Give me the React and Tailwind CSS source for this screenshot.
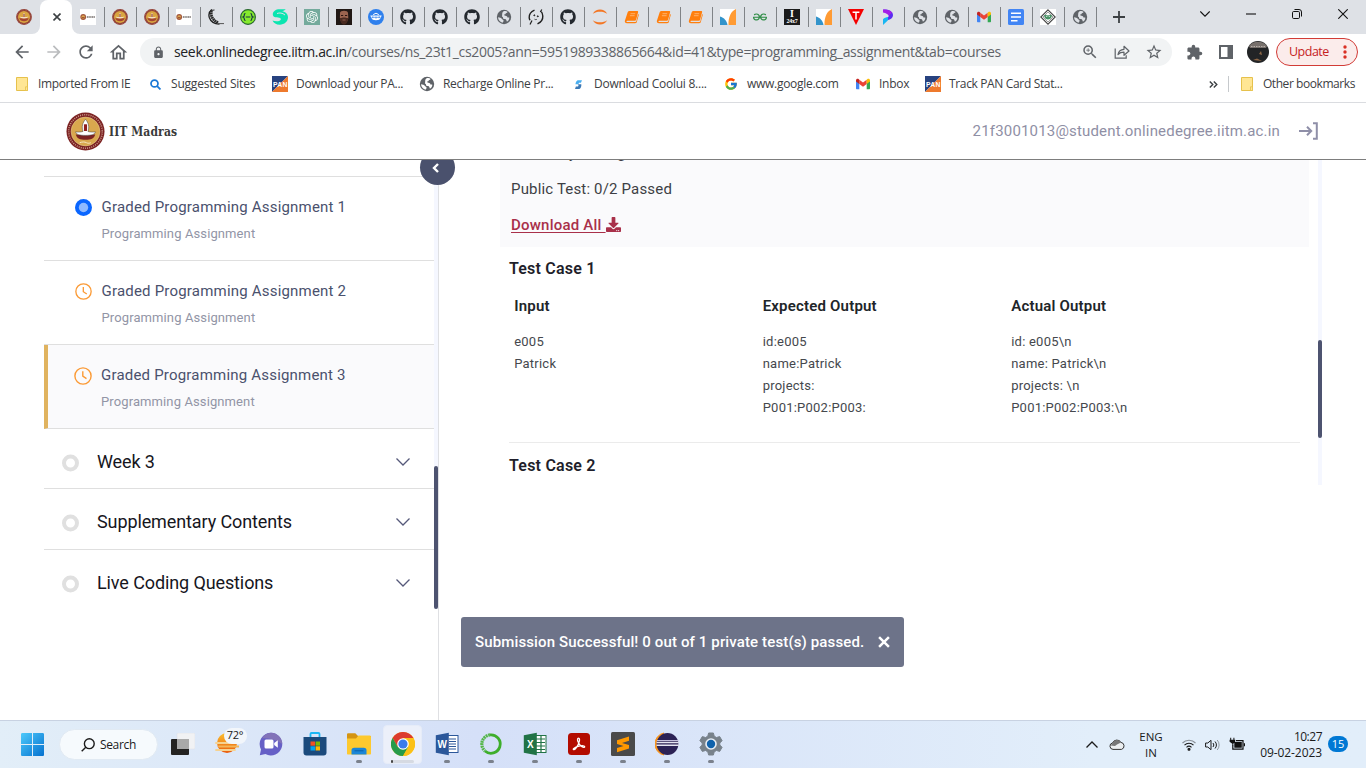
import React from "react";
import { FaGithub, FaDownload } from "react-icons/fa";
import { MdArrowBack, MdArrowForward, MdRefresh, MdOutlineHome, MdLock, MdZoomIn, MdStarBorder, MdExtension } from "react-icons/md";
import { FcGoogle } from "react-icons/fc";
import { SiGeeksforgeeks, SiOpenai } from "react-icons/si";

/* ---------- favicons ---------- */
const Seal = ({ className = "size-4" }) => (
  <svg viewBox="0 0 16 16" className={className}>
    <circle cx="8" cy="8" r="7.9" fill="#8d3b34" />
    <circle cx="8" cy="8" r="7" fill="none" stroke="#c07a62" strokeWidth=".7" strokeDasharray=".8 .8" />
    <circle cx="8" cy="8" r="6" fill="#d9a441" />
    <path d="M3.200 9.300h9.600c-.6 1.900-2.400 3-4.800 3s-4.200-1.100-4.800-3z" fill="#a4442f" />
    <path d="M8 3.800c1 1.300 1.200 2.600.7 4.300 1.600 0 2.700-.1 3.600-.5-.3 1.300-1.800 1.800-4.300 1.800s-4-.5-4.300-1.800c.9.400 2 .5 3.600.5-.5-1.700-.3-3 .7-4.300z" fill="#f3dfc4" />
    <path d="M8 5v3" stroke="#862b26" strokeWidth="1" />
  </svg>
);
const SealWide = () => (
  <svg viewBox="0 0 16 16" className="size-4">
    <rect width="16" height="16" fill="#fff" />
    <circle cx="3.200" cy="8" r="2.900" fill="#a2573c" />
    <circle cx="3.200" cy="8" r="1.800" fill="#dca850" />
    <path d="M2 8.700h2.500" stroke="#7d2c22" strokeWidth=".8" />
    <path d="M6.800 8h8.400" stroke="#77706d" strokeWidth="1.500" strokeDasharray="1.300 .4" />
  </svg>
);
const Quill = () => (
  <svg viewBox="0 0 16 16" className="size-4" fill="none">
    <path d="M3.800.5C1.200 2.500.3 5 1.300 8.500 2.600 12.300 6 15 11.500 15.200" stroke="#1d1d1d" strokeWidth="1.300" />
    <path d="M3.500 1.500c-1.200 5 1 10 7 12.300" stroke="#2a2a2a" strokeWidth="2.800" strokeDasharray="1.800 .4" />
    <path d="M2 1.500 6.500 1" stroke="#2a2a2a" strokeWidth="1" />
    <path d="M9 14.600h7" stroke="#555" strokeWidth="1" />
  </svg>
);
const GreenH = () => (
  <svg viewBox="0 0 16 16" className="size-4" fill="none">
    <circle cx="8" cy="8" r="7.400" fill="#85ea2d" stroke="#27662f" strokeWidth="1.100" />
    <path d="M5.500 4.500c-1 0-1.200.5-1.200 1.500S4 7.700 3 8c1 .3 1.300 1 1.300 2s.2 1.500 1.200 1.500M10.500 4.500c1 0 1.200.5 1.200 1.500S12 7.700 13 8c-1 .3-1.300 1-1.300 2s-.2 1.500-1.200 1.500M5.800 8h4.500" stroke="#173647" strokeWidth="1.200" />
  </svg>
);
const Swirl = () => (
  <svg viewBox="0 0 16 16" className="size-4">
    <path d="M.8 5.500C.8 2.300 3.800.3 7.500.3h6.300c-1 1-2.200 1.600-3.600 1.900C13.500 2.700 16 5 16 8.300c0 4.400-3.600 7.400-8.200 7.400-3.600 0-6.200-1.700-7.300-4.200 2 .8 4.600 1 6.600.4 2-.7 2.300-2.200 1-2.900C6 8.200.8 9 .8 5.500z" fill="#0be5b0" />
    <path d="M5 4.500c2.500-1 5.500-.6 8 1.500" stroke="#dee1e6" strokeWidth="1" fill="none" />
  </svg>
);
const Gpt = () => (
  <span className="flex size-4 items-center justify-center bg-[#74aa9c] text-white">
    <SiOpenai size={12} />
  </span>
);
const Face = () => (
  <svg viewBox="0 0 16 16" className="size-4">
    <rect width="16" height="16" fill="#211815" />
    <path d="M4 4c0-3 8-3 8 0l.3 5c-.3 3-2 5-4.200 5S4.200 12 3.900 9z" fill="#9b6450" />
    <path d="M4 9c1.200.3 2.200-.6 4-.6s3 .9 4 .6c0 4-1.600 6.500-4 6.500S4 13 4 9z" fill="#4a2b22" />
    <path d="M5 6.500h2.200M9 6.500h2.200" stroke="#2a1512" strokeWidth="1" />
    <path d="M6.500 11h3" stroke="#a8705e" strokeWidth=".8" />
  </svg>
);
const Bowl = () => (
  <svg viewBox="0 0 16 16" className="size-4">
    <circle cx="8" cy="8" r="8" fill="#2f80ed" />
    <path d="M2.300 6.500h11.400l-1 2.300c-.6 1.700-2 2.500-4.700 2.500s-4.100-.8-4.700-2.500z" fill="#fff" />
    <path d="M5.200 5.600 8 4.200l2.800 1.400" stroke="#fff" fill="none" />
    <path d="M4.800 7.300v1.900M8 7.500v2.200M11.200 7.300v1.900M3.500 8.300h9" stroke="#2f80ed" strokeWidth=".7" />
  </svg>
);
const Git = () => <FaGithub size={16} color="#24292f" />;
const Globe = ({ land = "#dee1e6" }) => (
  <svg viewBox="0 0 16 16" className="size-4">
    <circle cx="8" cy="8" r="7.200" fill="#5f6368" />
    <path d="M7.200 2.600c1.600-.8 3.300-.5 4.300.2-.1 1-.9 1.300-1.700 1.500-.3 1-.9 1.300-1.700 1.300-.2.800.3 1.100 1.300 1.200 1.200.1 2 .8 2 1.700h1.800c.3.800-.2 2.300-1 3.300-.8.900-1.400 1-1.600.2-.2-1.500-.8-1.900-2.300-1.900-1.300 0-1.500-.9-1.300-2-.9-.2-1.100-.8-.9-1.600.3-1.100-.3-2.700 1.100-3.900z" fill={land} />
    <path d="M2 8.300c1.700.1 3.300.7 4 1.600.7 1 1.700.9 1.600 2-.1.700-.8.900-.9 1.900C4 13.200 2.200 11 2 8.300z" fill={land} />
  </svg>
);
const PageGlobe = () => <Globe land="#ffffff" />;
const Brackets = () => (
  <svg viewBox="0 0 16 16" className="size-4" fill="none" stroke="#1f1f1f">
    <path d="M6.500 1.200C2.800 2.900 1 5.500 1.200 8.600c.1 1.200.4 1.900.8 2.700M9.500 14.800c3.700-1.700 5.500-4.700 5.300-7.800-.1-2-.6-3.200-1.500-4.400" strokeWidth="1.400" />
    <path d="m2 15.500 2-4M13.800.5 12.300 3" strokeWidth="1.200" />
    <circle cx="6.300" cy="6.300" r=".5" fill="#1f1f1f" />
    <circle cx="9.800" cy="7.300" r=".5" fill="#1f1f1f" />
    <path d="M6.500 10.200c.8.500 1.500.5 2.300.2" strokeWidth=".8" />
  </svg>
);
const Jupyter = () => (
  <svg viewBox="0 0 16 16" className="size-4" fill="#f37726">
    <path d="M.8 4.800C2.500 1.800 5 .6 8 .6s5.500 1.200 7.200 4.200C13.200 3.300 10.800 2.700 8 2.700s-5.200.6-7.200 2.100zM.8 11.200c1.700 3 4.200 4.200 7.200 4.200s5.500-1.200 7.200-4.200c-2 1.500-4.400 2.100-7.200 2.100s-5.200-.6-7.200-2.100z" />
  </svg>
);
const Book = () => (
  <svg viewBox="0 0 16 16" className="size-4">
    <path d="M5.500 2h7.600c.8 0 1.200.5 1 1.200l-2 7.600c-.2.7-.6 1-1.300 1H3.300c-.5 0-.8.200-.8.600s.3.600.8.600h8c.5 0 .8-.2 1-.8l1.900-7.100c.5.200.7.600.5 1.200l-1.900 6.700c-.2.800-.8 1.200-1.600 1.200H3c-1.600 0-2.500-1.100-2.100-2.500l2.600-8C3.800 2.600 4.500 2 5.500 2z" fill="#ff7f0e" />
    <path d="M6.500 4.700h4.700M5.900 6.700h4.700" stroke="#ffd3a6" strokeWidth=".6" />
  </svg>
);
const Peak = () => (
  <svg viewBox="0 0 16 16" className="size-4">
    <rect width="16" height="16" fill="#fff" />
    <path d="M0 7.500C4 8.500 7 12 7.500 16H0z" fill="#3394cb" />
    <path d="M16 0v16H8.500C8.200 8 11 2 16 0z" fill="#ff9b34" />
  </svg>
);
const Gfg = () => <SiGeeksforgeeks size={14} color="#2f8d46" />;
const I24 = () => (
  <span className="flex size-4 flex-col items-center bg-[#1b1b1b] font-['Liberation_Serif',serif] font-bold text-white">
    <span className="h-[9px] text-[10px] leading-[10px]">I</span>
    <span className="text-[6px] leading-[7px] tracking-[-0.2px]">24x7</span>
  </span>
);
const RedT = () => (
  <svg viewBox="0 0 16 16" className="size-4">
    <path d="M0 0h16L8 16z" fill="#f40000" />
    <path d="M4.600 3.200h6.800M8 3.200v7.300" stroke="#fff" strokeWidth="1.500" />
  </svg>
);
const PurpleP = () => (
  <svg viewBox="0 0 16 16" className="size-4">
    <path d="M3 .6C8 .2 13 2 13 6c0 3-2.600 4.700-5 5v-3c1.300-.6 1-2.200-.3-2.800z" fill="#5b2df0" />
    <path d="M3 .6C7 .4 10.500 1.500 12 3.500L8.800 6.800C8 5 6 4.300 3 3.600z" fill="#a31de8" />
    <path d="M3 10.300C4.300 8.800 6 8.200 8 8v3.300L3 16z" fill="#19b6f2" />
  </svg>
);
const Gmail = () => (
  <svg viewBox="0 0 16 16" className="size-4">
    <path d="M1 4.500 4.300 7v6.300H2c-.6 0-1-.4-1-1z" fill="#4285f4" />
    <path d="M15 4.500 11.700 7v6.300H14c.6 0 1-.4 1-1z" fill="#34a853" />
    <path d="M4.300 3.800 8 6.600l3.700-2.800V8L8 10.700 4.300 8z" fill="#ea4335" />
    <path d="M1 4.500C1 3 2.600 2.300 3.800 3.300l.5.500V8L1 5.600z" fill="#c5221f" />
    <path d="M15 4.500c0-1.500-1.600-2.200-2.800-1.200l-.5.500V8L15 5.600z" fill="#fbbc04" />
  </svg>
);
const Docs = () => (
  <svg viewBox="0 0 16 16" className="size-4">
    <rect width="16" height="16" rx="1.500" fill="#4285f4" />
    <path d="M3 4.300h10M3 8h10M3 11.700h6.500" stroke="#fff" strokeWidth="1.600" />
  </svg>
);
const Diamond = () => (
  <svg viewBox="0 0 16 16" className="size-4" fill="none">
    <rect width="16" height="16" fill="#fff" />
    <path d="m8 .8 7.200 7.200L8 15.200.8 8z" stroke="#444" strokeWidth="1.100" />
    <path d="m8 3 5 5-5 5-5-5z" stroke="#777" strokeWidth=".7" />
    <path d="M4 6.500c1.200-1.200 2.800-1 4 0 1.200-1 2.800-1.200 4 0-.3 2.800-2 4-4 4s-3.700-1.200-4-4z" fill="#4a9467" />
    <path d="M6 7.300h1.300M8.700 7.300H10" stroke="#fff" strokeWidth=".8" />
  </svg>
);

const TABS = [
  SealWide, Seal, Seal, SealWide, Quill, GreenH, Swirl, Gpt, Face, Bowl, Git, Git, Git, Globe, Brackets, Git,
  Jupyter, Book, Book, Book, Peak, Gfg, I24, Peak, RedT, PurpleP, Globe, Globe, Gmail, Docs, Diamond, Globe,
];

function TabStrip() {
  return (
    <div className="flex h-[34px] shrink-0 items-stretch bg-[#dee1e6]">
      <div className="flex w-8 items-center justify-end"><Seal /></div>
      <div className="w-2 overflow-hidden bg-white"><div className="size-full rounded-br-lg bg-[#dee1e6]" /></div>
      <div className="bg-[#dee1e6]">
        <div className="flex h-full w-8 items-center justify-center rounded-t-lg bg-white pl-px">
          <svg viewBox="0 0 8 8" className="size-2" stroke="#3c4043" strokeWidth="1.600"><path d="m.5.500 7 7m0-7-7 7" /></svg>
        </div>
      </div>
      <div className="flex">
        {TABS.map((Icon, i) => (
          <div key={i} className={i === 0 ? "flex w-8 bg-white" : "flex w-8"}>
            <div className={i === 0 ? "flex w-8 items-center rounded-bl-lg bg-[#dee1e6]" : "flex w-8 items-center"}>
              <span className={i === 0 ? "h-5 w-px" : "h-5 w-px bg-[#808387]"} />
              <span className="ml-[7px] flex size-4 items-center justify-center"><Icon /></span>
            </div>
          </div>
        ))}
        <div className="flex items-center">
          <span className="h-5 w-px bg-[#808387]" />
          <svg viewBox="0 0 12 12" className="ml-[16px] size-3" stroke="#3c4043" strokeWidth="1.800"><path d="M6 0v12M0 6h12" /></svg>
        </div>
      </div>
      <div className="ml-auto flex h-[28px] items-center text-[#111]">
        <svg viewBox="0 0 10 6" className="mr-[36px] h-[6px] w-[10px]" fill="none" stroke="currentColor" strokeWidth="1.100"><path d="m.3.500 4.700 4.700L9.700.5" /></svg>
        <svg viewBox="0 0 10 2" className="mr-[36px] h-[2px] w-[10px]"><path d="M0 1h10" stroke="currentColor" strokeWidth="1.100" /></svg>
        <svg viewBox="0 0 10 10" className="mr-[36px] size-[10px]" fill="none" stroke="currentColor"><rect x=".5" y="2.500" width="7" height="7" rx="1.200" /><path d="M2.500.500h4.500a2.500 2.500 0 0 1 2.500 2.500v4.500" /></svg>
        <svg viewBox="0 0 10 10" className="mr-[18px] size-[10px]" stroke="currentColor" strokeWidth="1.100"><path d="m.3.300 9.400 9.400m0-9.400L.3 9.700" /></svg>
      </div>
    </div>
  );
}

const Slot = ({ children }) => <span className="flex w-8 items-center justify-center">{children}</span>;

function Toolbar() {
  return (
    <div className="flex h-9 shrink-0 items-center bg-white pl-[6px] text-[#5f6368]">
      <Slot><MdArrowBack size={20} /></Slot>
      <Slot><MdArrowForward size={20} color="#babcbe" /></Slot>
      <Slot><MdRefresh size={20} /></Slot>
      <Slot><MdOutlineHome size={21} /></Slot>
      <div className="ml-[6px] flex h-7 w-[1032px] items-center rounded-full bg-[#f1f3f4] pl-[12px] font-['Open_Sans',sans-serif]">
        <MdLock size={13} />
        <span className="-mt-px ml-[9px] whitespace-nowrap text-[14px] tracking-[-0.332px] text-[#5f6368]">
          <span className="text-[#202124]">seek.onlinedegree.iitm.ac.in</span>/courses/ns_23t1_cs2005?ann=5951989338865664&amp;id=41&amp;type=programming_assignment&amp;tab=courses
        </span>
        <span className="ml-auto mr-[2px] flex">
          <Slot><MdZoomIn size={18} /></Slot>
          <Slot>
            <svg viewBox="0 0 16 16" className="size-4" fill="none" stroke="currentColor" strokeWidth="1.200">
              <path d="M1.200 4.500v9.700h11v-3" /><path d="M4 10.500c.6-3.300 2.800-5 6-5.200V2.300l5 4.700-5 4.300V8.200C7.500 8.200 5.600 8.900 4 10.500z" strokeLinejoin="round" />
            </svg>
          </Slot>
          <Slot><MdStarBorder size={18} /></Slot>
        </span>
      </div>
      <span className="ml-[6px] flex">
        <Slot><MdExtension size={17} /></Slot>
        <Slot>
          <svg viewBox="0 0 14 14" className="size-[14px]"><rect x="1" y="1" width="12" height="12" fill="#fff" stroke="currentColor" strokeWidth="2" /><rect x="8.500" y="1" width="5" height="12" fill="currentColor" /></svg>
        </Slot>
        <Slot>
          <svg viewBox="0 0 22 22" className="size-[22px]">
            <circle cx="11" cy="11" r="11" fill="#222426" />
            <path d="M2 5C6-.7 16-.7 20 5l-1 2H3z" fill="#77706c" />
            <path d="M4 5.500h14" stroke="#b9b0aa" strokeDasharray="1.500 1" />
            <path d="M12 13l2-3 1 4zM6 19l4-1.500L15 20z" fill="#8f6847" />
          </svg>
        </Slot>
      </span>
      <div className="ml-[2px] flex h-7 w-[82px] items-center rounded-full border border-[#d23b36] bg-[#fbeceb] pl-[12px] font-['Open_Sans',sans-serif] text-[12.500px] tracking-[-0.500px] text-[#c5221f]">
        Update
        <svg viewBox="0 0 4 14" className="ml-auto mr-[10px] h-[14px] w-1" fill="#d93025"><circle cx="2" cy="2" r="1.700" /><circle cx="2" cy="7" r="1.700" /><circle cx="2" cy="12" r="1.700" /></svg>
      </div>
    </div>
  );
}

const Folder = () => (
  <svg viewBox="0 0 12 14" className="h-[14px] w-3"><path d="M.5.500h11v13H.5z" fill="#ffe694" stroke="#e6c14c" /><path d="M9.500 13.500V9.800h2v3.700z" fill="#ffe694" stroke="#e6c14c" strokeWidth=".8" /></svg>
);
const Pan = () => (
  <svg viewBox="0 0 16 16" className="size-4">
    <path d="M0 0h16L0 16z" fill="#27427f" /><path d="M16 0v16H0z" fill="#ee7a2d" />
    <text x="8" y="11" textAnchor="middle" fontSize="6.800" fontWeight="700" fontFamily="Liberation Sans" fill="#fff" textLength="14">PAN</text>
  </svg>
);
const Lens = () => (
  <svg viewBox="0 0 12 12" className="size-[11px]" fill="none" stroke="#1a78d6" strokeWidth="1.900"><circle cx="4.900" cy="4.900" r="3.800" /><path d="m7.800 7.800 3.600 3.600" /></svg>
);
const Bolt = () => (
  <svg viewBox="0 0 8 10" className="h-[9px] w-[7px]"><path d="M3 0h5L6.800 3H4.500L4 4.800H.5C.8 2.500 1.500.8 3 0z" fill="#49aef0" /><path d="M5 10H0l1-2.600h2.500l.6-1.700L3 4.600h4.200C7.500 7 6.800 9 5 10z" fill="#3b78b5" /></svg>
);
const BOOKMARKS = [
  [Folder, "Imported From IE", "w-[133px]"],
  [Lens, "Suggested Sites", "w-[125px] tracking-[-0.200px]"],
  [Pan, "Download your PA...", "w-[147px] tracking-[-0.300px]"],
  [PageGlobe, "Recharge Online Pr...", "w-[151px] tracking-[-0.300px]"],
  [Bolt, "Download Coolui 8....", "w-[153px] tracking-[-0.250px]"],
  [() => <FcGoogle size={14} />, "www.google.com", "w-[132px] tracking-[-0.280px]"],
  [Gmail, "Inbox", "w-[70px] tracking-[-0.250px]"],
  [Pan, "Track PAN Card Stat...", "w-[140px]"],
];

function Bookmarks() {
  return (
    <div className="flex h-[33px] shrink-0 items-center border-b border-[#dadce0] bg-white pb-[4px] pl-[14px] font-['Open_Sans',sans-serif] text-[12px] tracking-[-0.350px] text-[#3c4043]">
      {BOOKMARKS.map(([Icon, label, w]) => (
        <div key={label} className={"flex items-center gap-2 whitespace-nowrap " + w}>
          <span className="flex size-4 items-center justify-center"><Icon /></span>{label}
        </div>
      ))}
      <div className="ml-auto flex items-center pr-[11px]">
        <svg viewBox="0 0 9 7" className="h-[7px] w-[9px]" fill="none" stroke="#3c4043" strokeWidth="1.400"><path d="m.8.500 3 3-3 3m4-6 3 3-3 3" /></svg>
        <span className="ml-[10px] mr-[12px] h-4 w-px bg-[#c6c9cc]" />
        <Folder />
        <span className="ml-[10px] whitespace-nowrap tracking-[-0.430px]">Other bookmarks</span>
      </div>
    </div>
  );
}

function PageHeader() {
  return (
    <div className="flex h-[57px] shrink-0 items-center border-b border-[#7d7d7d] bg-white pl-[66px] pr-[48px]">
      <svg viewBox="0 0 40 40" className="size-[39px]">
        <circle cx="20" cy="20" r="19.500" fill="#7c2323" />
        <circle cx="20" cy="20" r="17.200" fill="none" stroke="#c99a8c" strokeWidth="1.600" strokeDasharray="1 1.200" />
        <circle cx="20" cy="20" r="14.800" fill="#d9a84e" stroke="#e9d3a0" strokeWidth=".5" />
        <path d="M10 23h20c-1 4-4.500 5.500-10 5.500S11 27 10 23z" fill="#7c2323" />
        <path d="M20 7.500c3 3.500 4.200 7.500 2.600 12.500 3 .8 5.200.6 7.600.4-.6 2.600-4.200 3.600-10.200 3.600S10.400 23 9.800 20.400c2.400.2 4.600.4 7.600-.4C15.800 15 17 11 20 7.500z" fill="#fff" stroke="#333" strokeWidth=".5" />
        <rect x="18.400" y="12.500" width="3.200" height="7" rx=".6" fill="#8f1f1f" />
        <path d="M14 31.500c3-1 5-1 7 0s3 .5 4.500 0" stroke="#f6e6c4" strokeWidth="1" fill="none" />
      </svg>
      <span className="ml-[4px] mt-[1px] whitespace-nowrap font-['DejaVu_Serif_Condensed','DejaVu_Serif',serif] text-[12px] font-bold tracking-[0.100px] text-[#3a3a3a]">IIT Madras</span>
      <span className="ml-auto whitespace-nowrap font-['Roboto',sans-serif] text-[15px] tracking-[0.170px] text-[#8f8fa5]">21f3001013@student.onlinedegree.iitm.ac.in</span>
      <svg viewBox="0 0 19 18" className="ml-[19px] h-[18px] w-[19px]" fill="none" stroke="#8f8fa8" strokeWidth="2"><path d="M0 9h12M8 4.800 12.200 9 8 13.200M14 1.200h3.800v15.600H14" /></svg>
    </div>
  );
}

function Assignment({ title, state, active }) {
  return (
    <div className={"flex h-[84px] border-b border-[#dfdfdf] " + (active ? "border-l-4 border-l-[#e0b35f] bg-[#fafafc] pl-[26px]" : "pl-[31px]")}>
      <span className="mt-[22px]">
        {state === "current" ? (
          <svg viewBox="0 0 17 17" className="size-[17px]"><circle cx="8.500" cy="8.500" r="8.500" fill="#0a66ff" /><circle cx="8.500" cy="8.500" r="4.700" fill="#8fbaff" /></svg>
        ) : (
          <svg viewBox="0 0 18 18" className={active ? "size-[18px]" : "size-[17px]"} fill="none" stroke="#fb9a35" strokeWidth="1.400"><circle cx="9" cy="9" r="8.100" /><path d="M8.800 4.200v5l3.700 2.400" /></svg>
        )}
      </span>
      <div className={"flex flex-col whitespace-nowrap font-['Roboto',sans-serif] " + (active ? "ml-[9px]" : "ml-[9.500px]")}>
        <span className="mt-[20px] text-[15px] leading-5 tracking-[0.200px] text-[#4a516d]">{title}</span>
        <span className="mt-[7px] text-[13px] leading-5 tracking-[0.110px] text-[#9295a6]">Programming Assignment</span>
      </div>
    </div>
  );
}

function Section({ title, className }) {
  return (
    <div className={"flex items-center pl-[18px] pr-[24px] " + className}>
      <svg viewBox="0 0 17 18" className="mt-[8px] h-[18px] w-[17px]"><circle cx="8.500" cy="9" r="6.500" fill="#fff" stroke="#e0e0e0" strokeWidth="4" /></svg>
      <span className="ml-[18px] mt-[5px] whitespace-nowrap font-['Roboto',sans-serif] text-[18px] tracking-[-0.110px] text-[#16161d]">{title}</span>
      <svg viewBox="0 0 14 8" className="ml-auto mt-[6px] h-2 w-[14px]" fill="none" stroke="#55597a" strokeWidth="1.300"><path d="m.5.500 6.500 6.500L13.500.5" /></svg>
    </div>
  );
}

function Sidebar() {
  return (
    <div className="flex w-[395px] shrink-0 items-start border-r border-[#dfe0e3]">
      <div className="w-[390px]">
        <div className="h-[17px] border-b border-[#dfdfdf]" />
        <Assignment title="Graded Programming Assignment 1" state="current" />
        <Assignment title="Graded Programming Assignment 2" state="pending" />
        <Assignment title="Graded Programming Assignment 3" state="pending" active />
        <Section title="Week 3" className="h-[60px] border-b border-[#dfdfdf]" />
        <Section title="Supplementary Contents" className="h-[61px] border-b border-[#dfdfdf]" />
        <Section title="Live Coding Questions" className="h-[60px]" />
      </div>
      <div className="flex h-[449px] w-1 items-end bg-[#f5f7ff]"><div className="h-[143px] w-1 rounded-sm bg-[#4d5370]" /></div>
    </div>
  );
}

const COLUMNS = [
  ["Input", ["e005", "Patrick"]],
  ["Expected Output", ["id:e005", "name:Patrick", "projects:", "P001:P002:P003:"]],
  ["Actual Output", ["id: e005\\n", "name: Patrick\\n", "projects: \\n", "P001:P002:P003:\\n"]],
];

function Results() {
  return (
    <div className="flex h-[325px] w-[822px] font-['Roboto',sans-serif]">
      <div className="w-[809px] overflow-hidden">
        <div className="h-[87px] overflow-hidden bg-[#fafafc] pl-[11px] text-[15px] leading-[36px] tracking-[0.170px] text-[#3d3f45]">
          <div className="-mt-[25px] h-9">Summary Listing</div>
          <div className="h-9">Public Test: 0/2 Passed</div>
          <div className="flex h-9 items-center font-medium tracking-[0.220px] text-[#a9304a]">
            <span className="underline underline-offset-[2px]">Download All&nbsp;</span>
            <FaDownload size={15} className="-mt-[2px]" />
          </div>
        </div>
        <div className="pl-[9px] pr-[9px]">
          <div className="h-[44px] pt-[10px] text-[16px] font-semibold leading-6 tracking-[0.200px] text-[#1f1f2b]">Test Case 1</div>
          <div className="grid h-[151px] grid-cols-[248.500px_248.500px_1fr] pl-[5.200px]">
            {COLUMNS.map(([head, lines]) => (
              <div key={head} className="whitespace-nowrap">
                <div className="pt-[3px] text-[15px] font-semibold leading-6 tracking-[0.190px] text-[#212529]">{head}</div>
                <div className="pt-[13px] text-[13px] leading-[22px] tracking-[0.230px] text-[#45484d]">
                  {lines.map((l) => <div key={l}>{l}</div>)}
                </div>
              </div>
            ))}
          </div>
          <div className="border-t border-[#ebebeb] pt-[11px] text-[16px] font-semibold leading-6 tracking-[0.220px] text-[#1f1f2b]">Test Case 2</div>
        </div>
      </div>
      <div className="ml-auto flex w-1 flex-col bg-[#f5f7ff] pt-[180px]"><div className="h-[98px] w-1 rounded-sm bg-[#4d5370]" /></div>
    </div>
  );
}

function Page() {
  return (
    <div className="relative flex min-h-0 flex-1 overflow-hidden bg-white pl-[44px]">
      <Sidebar />
      <div className="pl-[61px]"><Results /></div>
      <div className="absolute left-[420px] top-[-10px] flex size-[35px] items-center justify-center rounded-full bg-[#4a516d]">
        <svg viewBox="0 0 7 10" className="mr-[4px] h-[10px] w-[7px]" fill="none" stroke="#fff" strokeWidth="2.400"><path d="M6 1 2 5l4 4" /></svg>
      </div>
      <div className="absolute left-[461px] top-[457px] flex h-[50px] w-[443px] items-center rounded-[3px] bg-[#6d7389] pl-[14px] font-['Roboto',sans-serif] text-[15px] font-medium tracking-[0.130px] text-white">
        <span className="whitespace-nowrap">Submission Successful! 0 out of 1 private test(s) passed.</span>
        <svg viewBox="0 0 11 11" className="ml-auto mr-[14px] size-[12px]" stroke="#fff" strokeWidth="2.300"><path d="m1 1 9 9m0-9-9 9" /></svg>
      </div>
    </div>
  );
}

/* ---------- taskbar ---------- */
const Windows = () => (
  <svg viewBox="0 0 23 23" className="size-[23px] shrink-0">
    <defs><linearGradient id="win" x1="0" y1="0" x2="1" y2="1"><stop stopColor="#4cc9fb" /><stop offset="1" stopColor="#0571cf" /></linearGradient></defs>
    <path d="M0 1.500C0 .5.500 0 1.500 0H11v11H0zM12 0h9.500c1 0 1.500.5 1.500 1.500V11H12zM0 12h11v11H1.500C.5 23 0 22.500 0 21.500zM12 12h11v9.500c0 1-.5 1.500-1.500 1.500H12z" fill="url(#win)" />
  </svg>
);
const TaskView = () => (
  <svg viewBox="0 0 24 22" className="h-[22px] w-6"><rect x="6" y="0" width="18" height="16" rx="1" fill="#f1f2f4" stroke="#dcdfe4" strokeWidth=".5" /><rect x="0" y="6" width="18" height="16" rx="1" fill="#242322" /><path d="M6 6h12v10H6z" fill="#a9a9a9" /></svg>
);
const Weather = () => (
  <span className="relative -mt-[3px] block h-[26px] w-6">
    <svg viewBox="0 0 24 24" className="absolute left-0 top-[3px] size-6">
      <defs><linearGradient id="sun" x1="0" y1="0" x2="0" y2="1"><stop stopColor="#fbc02e" /><stop offset="1" stopColor="#ea5a0c" /></linearGradient></defs>
      <circle cx="12" cy="10" r="10" fill="url(#sun)" />
      <path d="M1 10h20M1 17h19" stroke="#f6d290" strokeWidth="1.800" strokeLinecap="round" /><path d="M4 13.500h20" stroke="#f3b65a" strokeWidth="1.800" strokeLinecap="round" />
    </svg>
    <span className="absolute left-[9px] top-[-2px] flex h-[16px] w-[23px] items-center justify-center rounded-full bg-[#f2f6fb] font-['Open_Sans',sans-serif] text-[11px] tracking-[-0.300px] text-[#1a1a1a]">72°</span>
  </span>
);
const Chat = () => (
  <svg viewBox="0 0 24 24" className="size-6"><path d="M12 .8a11.300 11.300 0 1 1-5.500 21.200L.8 23.200 2 17.500A11.300 11.300 0 0 1 12 .8z" fill="#6660c6" /><path d="M12 .8a11.300 11.300 0 0 1 11.200 11.200C18 8 10 6 3 6.200A11.200 11.200 0 0 1 12 .8z" fill="#8273b8" /><rect x="5.500" y="7.500" width="9" height="9" rx="1.500" fill="#fff" /><path d="m15.200 11 3.600-2.800v7.600L15.200 13z" fill="#fff" /></svg>
);
const Store = () => (
  <svg viewBox="0 0 24 24" className="size-6"><path d="M7.500 6V2c0-.6.4-1 1-1h7c.6 0 1 .4 1 1v4" fill="none" stroke="#1bb7f4" strokeWidth="1.800" /><path d="M.5 5h23v15.500c0 2-1 3-3 3h-17c-2 0-3-1-3-3z" fill="#1b4a7c" /><path d="M7.500 9.500H12v4.200H7.500z" fill="#f25022" /><path d="M12.600 9.500H17v4.200h-4.400z" fill="#7fba00" /><path d="M7.500 14.300H12v4.200H7.500z" fill="#00a4ef" /><path d="M12.600 14.300H17v4.200h-4.400z" fill="#ffb900" /></svg>
);
const Explorer = () => (
  <svg viewBox="0 0 24 22" className="h-[22px] w-6"><path d="M0 1.500C0 .6.600.2 1.300.2h7L11 3H24v4H0z" fill="#d49413" /><path d="M0 5.500h9l2.500-3h11c1 0 1.500.5 1.500 1.500v16.500c0 .6-.4 1-1 1H1c-.6 0-1-.4-1-1z" fill="#fdc92f" /><path d="M4.500 17.500c0-1.800.8-2.700 2.700-2.700h9.600c1.900 0 2.700.9 2.700 2.700v4h-15z" fill="#1a86d8" /><path d="M7.500 17.800h9" stroke="#0b5ea8" strokeWidth="1" /></svg>
);
const Chrome = () => (
  <svg viewBox="0 0 24 24" className="size-6"><circle cx="12" cy="12" r="12" fill="#fbc116" /><path d="M12 6h10.400A12 12 0 0 0 1.600 6L6.800 15z" fill="#dc3b2e" /><path d="M1.600 6A12 12 0 0 0 12 24l5.200-9H6.800z" fill="#279b4b" /><path d="M22.400 6H12l5.200 9L12 24A12 12 0 0 0 22.400 6z" fill="#fbc116" /><circle cx="12" cy="12" r="5.800" fill="#fff" /><circle cx="12" cy="12" r="4.600" fill="#3a7cec" /></svg>
);
const Office = ({ dark, letter, sheet }) => (
  <svg viewBox="0 0 24 24" className="size-6">
    <rect x="12" y="3.500" width="11" height="17" fill="#fff" stroke={dark} strokeWidth="1" />
    {sheet ? <path d="M13 7h9M13 10.500h9M13 14h9M13 17.500h9M18 4v16" stroke={dark} strokeWidth="1.200" /> : <path d="M14 7h7M14 9.500h7M14 12h7M14 14.500h7M14 17h7" stroke={dark} strokeWidth="1.200" />}
    <path d="m.8 3.200 13-2.500v22.600L.8 20.800z" fill={dark} />
    <text x="7.300" y="15.800" textAnchor="middle" fontFamily="Liberation Sans" fontWeight="700" fontSize="10" fill="#fff">{letter}</text>
  </svg>
);
const Anaconda = () => (
  <svg viewBox="0 0 24 24" className="size-6" fill="none" stroke="#3eae2b"><path d="M11 2.900a9.200 9.200 0 1 1-5 16.100" strokeWidth="2.800" /><path d="M11 2.900a9.200 9.200 0 0 0-5 16.100" strokeWidth="3.200" strokeDasharray="1.900 .6" opacity=".85" /></svg>
);
const Acrobat = () => (
  <svg viewBox="0 0 22 22" className="size-[22px]"><rect width="22" height="22" rx="3.500" fill="#b30b00" /><path d="M10.500 5.200c2.200 0 .6 5.800-2.500 9.800-2 2.600-3.500 1.600-2.200.4 2.300-2 8-3.200 10.200-2.400 1.600.9.200 2.200-2 .8-2.700-1.900-4.800-5.700-4.500-7.400.1-.8.500-1.200 1-1.200z" fill="none" stroke="#fff" strokeWidth="1.300" /></svg>
);
const Sublime = () => (
  <svg viewBox="0 0 24 24" className="size-6"><rect width="24" height="24" rx="1.500" fill="#4a4a4a" /><path d="m6 8.300 12-3.800v4.200l-7 2.200 7 2.200v3.400L6 20.200V16l6.500-2L6 12z" fill="#ff9800" /></svg>
);
const Eclipse = () => (
  <svg viewBox="0 0 24 24" className="size-6"><path d="M9 1A11.200 11.200 0 0 0 9 23 14 14 0 0 1 9 1z" fill="#f7941e" stroke="#f7941e" /><circle cx="12.500" cy="12" r="10.900" fill="#2c2255" /><path d="M1.500 10.500h22.300M1.500 13.300h22.300" stroke="#e6e4f0" strokeWidth="1.500" /><path d="M2 8.500h21.500" stroke="#c4bfdb" strokeWidth="1" /></svg>
);
const Gear = () => (
  <svg viewBox="0 0 24 24" className="size-6"><path d="M9.600 1h4.800l.8 3.200 2.300 1.300 3.200-.9 2.400 4.100-2.300 2.300v2l2.300 2.300-2.400 4.100-3.200-.9-2.300 1.300-.8 3.200H9.600l-.8-3.200-2.300-1.300-3.200.9L.9 15.300 3.200 13v-2L.9 8.700l2.400-4.100 3.200.9 2.300-1.300z" fill="#78828b" stroke="#78828b" strokeLinejoin="round" /><circle cx="12" cy="12" r="5.800" fill="#e8eef5" /><circle cx="12" cy="12" r="4.200" fill="#0f62ac" /></svg>
);

const APPS = [
  [TaskView], [Weather], [Chat], [Store], [Explorer, 1], [Chrome, 2],
  [() => <Office dark="#2b579a" letter="W" />, 1], [Anaconda, 1], [() => <Office dark="#217346" letter="X" sheet />, 1],
  [Acrobat, 1], [Sublime, 1], [Eclipse, 1], [Gear, 1],
];

function Taskbar() {
  return (
    <div className="flex h-12 shrink-0 items-center border-t border-[#c8d2e2] bg-linear-to-r from-[#e2eef8] via-[#d5e0f8] via-35% to-[#e2eefa] to-80% pl-[21px] font-['Open_Sans',sans-serif] text-[#1b1b1b]">
      <Windows />
      <div className="ml-[15px] flex h-[31px] w-[99px] shrink-0 items-center rounded-full border border-[#e1eaf3] bg-[#f6fafd] pl-[21px]">
        <svg viewBox="0 0 14 14" className="size-[14px]" fill="none" stroke="#1b1b1b" strokeWidth="1.400"><circle cx="8.300" cy="5.700" r="4.900" /><path d="M4.800 9.200.7 13.300" /></svg>
        <span className="ml-[5px] text-[12px] tracking-[-0.350px]">Search</span>
      </div>
      <div className="ml-[2.500px] flex">
        {APPS.map(([Icon, run], i) => (
          <div key={i} className="flex h-[47px] w-[44px] flex-col items-center">
            <div className={"mt-[4px] flex h-[39px] w-[39px] shrink-0 flex-col items-center rounded " + (run === 2 ? "border border-[#e6ecf8] bg-[#ecf0fa]" : "")}>
              <div className={"flex h-6 items-center justify-center " + (run === 2 ? "mt-[6px]" : "mt-[7px]")}><Icon /></div>
              {run === 1 && <span className="mt-[4px] h-[3px] w-[6px] shrink-0 rounded-full bg-[#7b818c]" />}
              {run === 2 && <span className="mt-[4px] flex h-[3px] w-[23px] shrink-0 rounded-full bg-[#d6dae2]"><span className="h-[3px] w-[2px] rounded-full bg-[#444]" /></span>}
            </div>
          </div>
        ))}
      </div>
      <div className="ml-auto flex items-center pr-[18px]">
        <svg viewBox="0 0 12 7" className="h-[7px] w-3" fill="none" stroke="currentColor" strokeWidth="1.300"><path d="m.5 6.500 5.500-5.500 5.500 5.500" /></svg>
        <svg viewBox="0 0 16 11" className="ml-[11px] h-[11px] w-4"><path d="M4 10.400a3.300 3.300 0 0 1-.5-6.500A4.800 4.800 0 0 1 12 3.400a3.600 3.600 0 0 1 .5 7z" fill="#eceff1" stroke="#333" strokeWidth="1" /><path d="M3.500 4A4.800 4.800 0 0 1 12 3.400L8 5.500 6 7 1.500 6.500z" fill="#777" /></svg>
        <div className="ml-[13px] w-[26px] text-center text-[11.500px] leading-4">ENG<br />IN</div>
        <svg viewBox="0 0 14 12" className="ml-[18px] h-3 w-[14px]" fill="none" stroke="currentColor" strokeWidth="1.100"><path d="M.5 4a9 9 0 0 1 13 0" opacity=".45" /><path d="M2.500 6.200a6.300 6.300 0 0 1 9 0M4.500 8.300a3.600 3.600 0 0 1 5 0" /><circle cx="7" cy="10.300" r="1" fill="currentColor" /></svg>
        <svg viewBox="0 0 16 12" className="ml-[9px] h-3 w-4" fill="none" stroke="currentColor" strokeWidth="1"><path d="M.6 4h2.200L6 1.300v9.400L2.800 8H.6z" strokeLinejoin="round" /><path d="M8 4a3 3 0 0 1 0 4M10 2.500a5 5 0 0 1 0 7" /><path d="M12.200 1a7.500 7.500 0 0 1 0 10" opacity=".4" /></svg>
        <svg viewBox="0 0 16 13" className="-mt-[2px] ml-[8px] h-[13px] w-4"><path d="M7 3.600h7v8.600H3.800V8" fill="none" stroke="#111" strokeWidth="1.200" /><path d="M5.300 5h7.500v5.800H5.300zM1.200.8h1v2h2.200v-2h1v2h.8v2L4.300 6.800v1.500h-1V6.800L.6 4.800v-2h.6zM14.800 6.300H16v3h-1.200z" fill="#111" /></svg>
        <div className="ml-[9px] w-[68px] whitespace-nowrap text-right text-[12px] leading-4 tracking-[-0.080px]"><span className="tracking-[-0.500px]">10:27</span><br />09-02-2023</div>
        <span className="-mt-px ml-[6px] flex h-4 w-[20px] items-center justify-center rounded-full bg-[#0078d4] text-[11px] text-white">15</span>
      </div>
    </div>
  );
}

export default function App() {
  return (
    <div className="flex h-[768px] w-[1366px] flex-col overflow-hidden bg-white">
      <TabStrip />
      <Toolbar />
      <Bookmarks />
      <PageHeader />
      <Page />
      <Taskbar />
    </div>
  );
}
